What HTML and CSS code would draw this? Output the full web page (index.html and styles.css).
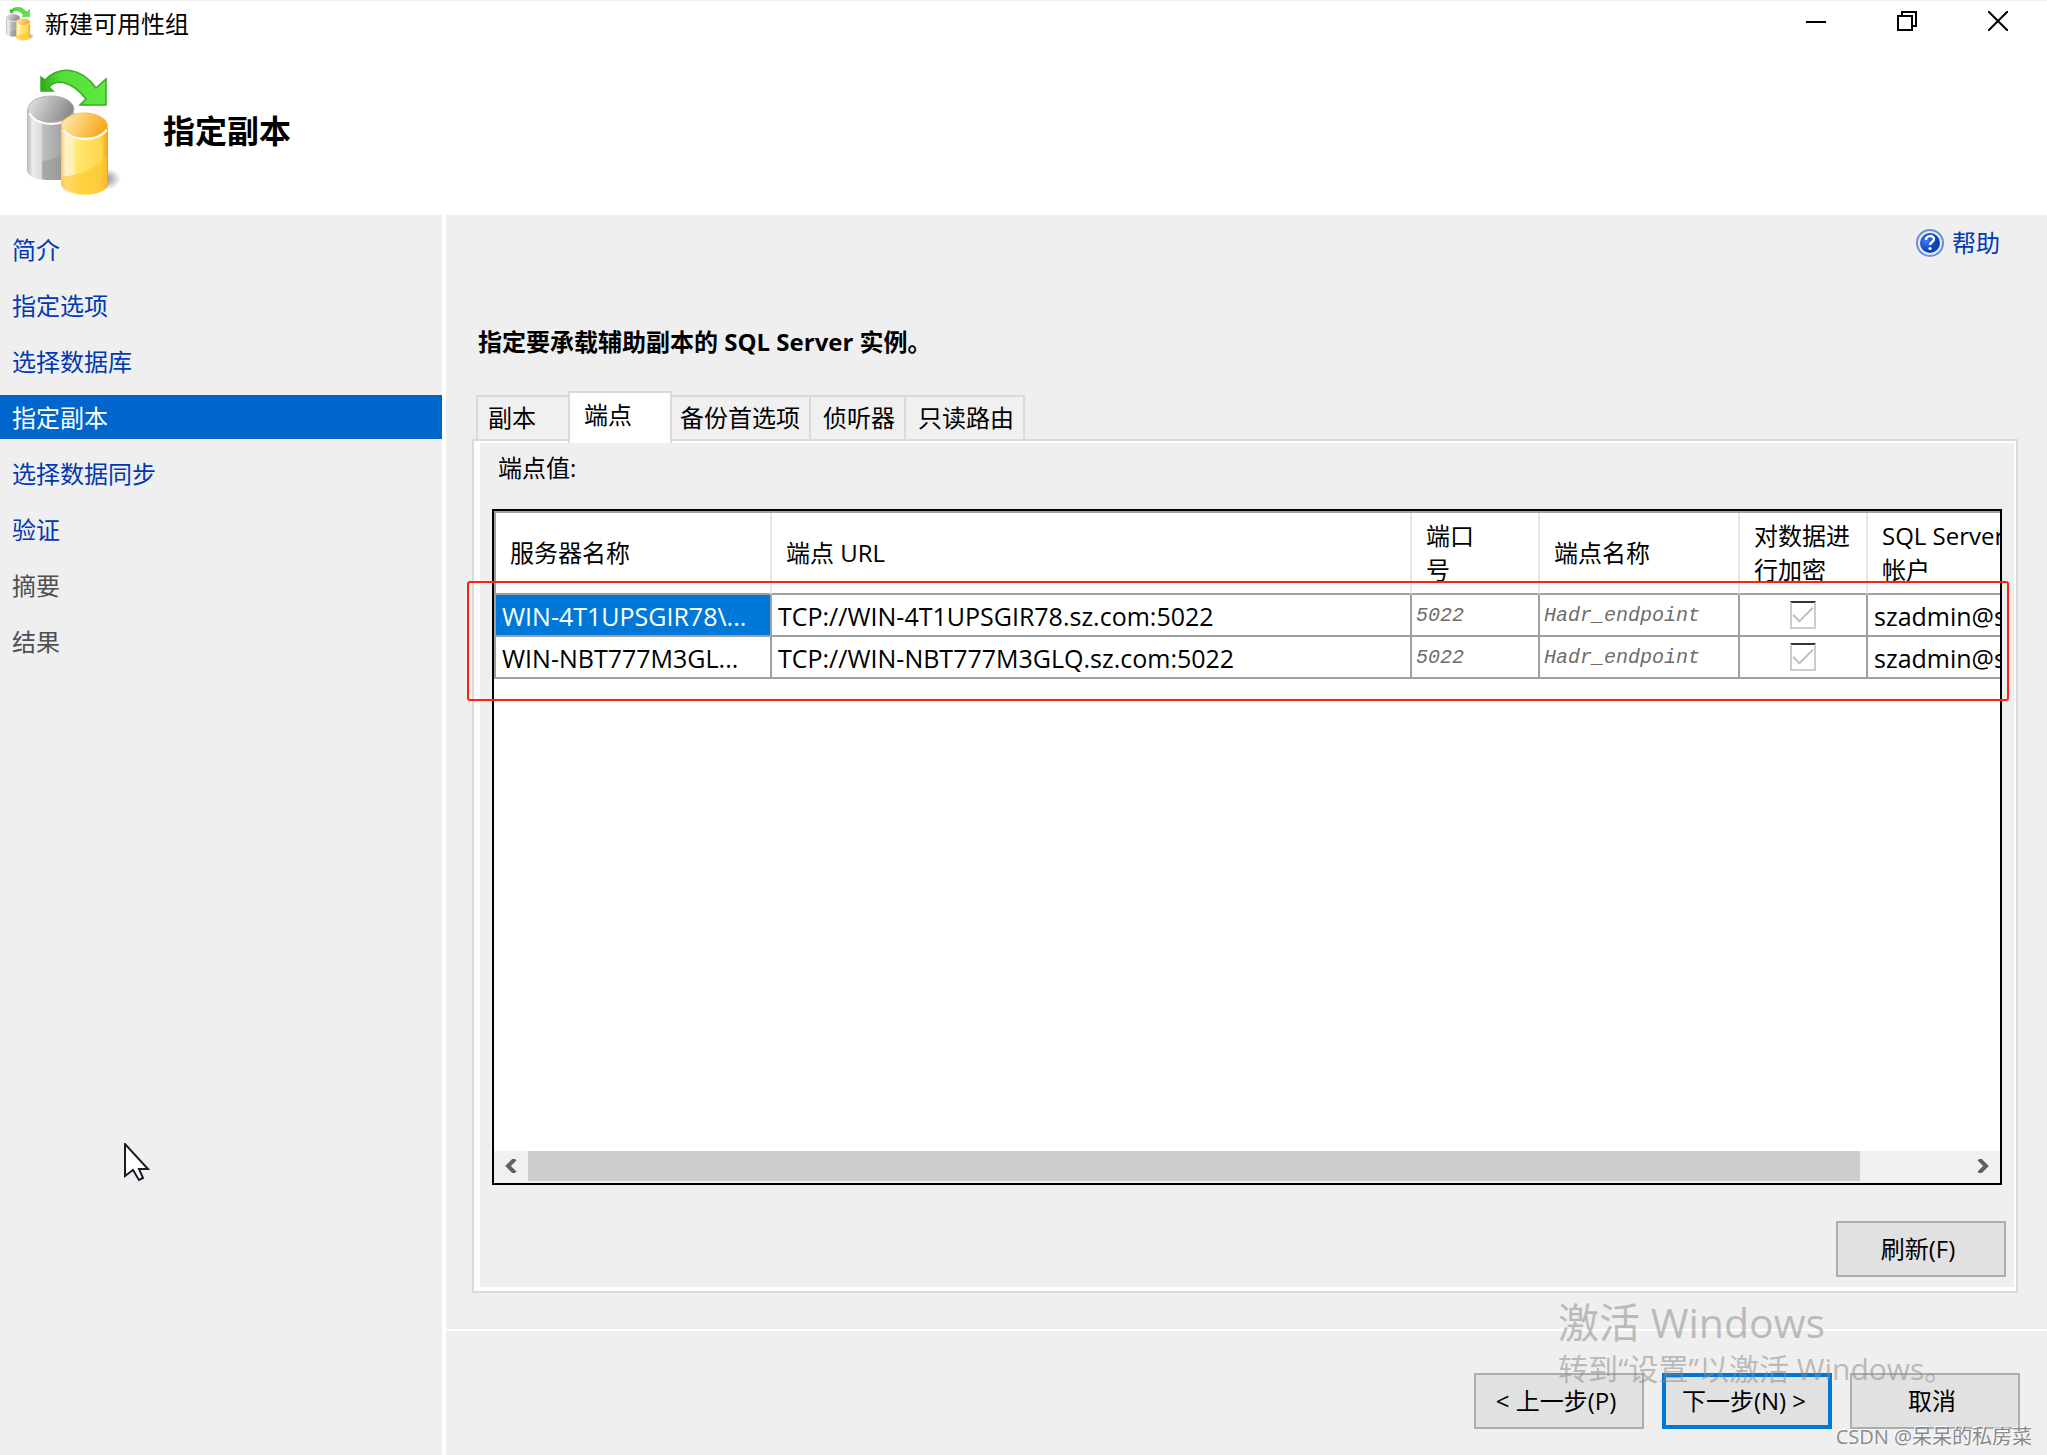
FILE: index.html
```html
<!DOCTYPE html>
<html lang="zh-CN">
<head>
<meta charset="utf-8">
<title>新建可用性组</title>
<link rel="stylesheet" href="styles.css">
</head>
<body>
<svg class="defs" width="0" height="0" aria-hidden="true">
  <defs>
    <linearGradient id="gray-side" x1="0" x2="1"><stop offset="0" stop-color="#b8b8b8"/><stop offset=".12" stop-color="#ececec"/><stop offset=".3" stop-color="#dcdcdc"/><stop offset=".34" stop-color="#bdbdbd"/><stop offset="1" stop-color="#959595"/></linearGradient>
    <linearGradient id="gray-top" x1="0" x2="1" y2=".3"><stop offset="0" stop-color="#e6e6e6"/><stop offset="1" stop-color="#8c8c8c"/></linearGradient>
    <linearGradient id="gold-side" x1="0" x2="1"><stop offset="0" stop-color="#fbc75c"/><stop offset=".1" stop-color="#fff3cc"/><stop offset=".27" stop-color="#fff0a8"/><stop offset=".32" stop-color="#ffe873"/><stop offset=".85" stop-color="#ffd64a"/><stop offset="1" stop-color="#f0a020"/></linearGradient>
    <linearGradient id="gold-top" x1="0" x2="1" y2=".3"><stop offset="0" stop-color="#fff0b8"/><stop offset="1" stop-color="#f9a91e"/></linearGradient>
    <linearGradient id="arrow" x1="0" x2="1"><stop offset="0" stop-color="#2fa81a"/><stop offset=".3" stop-color="#55dc38"/><stop offset="1" stop-color="#5fe842"/></linearGradient>
    <radialGradient id="shade"><stop offset="0" stop-color="#888"/><stop offset="1" stop-color="#888" stop-opacity="0"/></radialGradient>
    <radialGradient id="help-fill" cx=".3" cy=".4"><stop offset="0" stop-color="#3c7cff"/><stop offset="1" stop-color="#0c44b8"/></radialGradient>
    <symbol id="databases" viewBox="0 0 94 128" preserveAspectRatio="none">
      <ellipse cx="78" cy="110" rx="16" ry="11" fill="url(#shade)"/>
      <path d="M0 41v61c2 6 10 9 18 9h29V41z" fill="url(#gray-side)"/>
      <path d="M15 92q20-2 32-18v37H19l-4-2z" fill="#8a8a8a" opacity=".4"/>
      <ellipse cx="24" cy="40" rx="23" ry="13" fill="url(#gray-top)" stroke="#b5b5b5" stroke-width="1"/>
      <path d="M2 44q7 11 22 11t22-9" fill="none" stroke="#fff" stroke-width="2"/>
      <path d="M34 59v57c2 7 12 10 24 10s21-4 23-10V59z" fill="url(#gold-side)"/>
      <path d="M35 108q30-4 45-21v29c-2 6-11 9-22 9s-21-3-23-9z" fill="#ffc42c" opacity=".6"/>
      <ellipse cx="57.500" cy="57" rx="23" ry="13" fill="url(#gold-top)" stroke="#f9c052" stroke-width="1"/>
      <path d="M36 61q8 9 22 9t22-9" fill="none" stroke="#fff" stroke-width="2.500" opacity=".9"/>
      <path d="M14 8v14h12l-4-4c8-9 24-5 37 12l-6 6h26V10l-10 9C54-2 32-4 18 11z" fill="url(#arrow)" stroke="#35ad20" stroke-width="1.500"/>
    </symbol>
  </defs>
</svg>

<header class="top">
  <div class="titlebar">
    <svg class="app-icon" aria-hidden="true"><use href="#databases"/></svg>
    <span class="window-title">新建可用性组</span>
    <div class="window-controls">
      <button type="button" aria-label="最小化"><svg width="20" height="20"><path d="M0 11h20" stroke="#000" stroke-width="2"/></svg></button>
      <button type="button" aria-label="还原"><svg width="20" height="20"><path d="M1 5h14v14H1zM5 5V1h14v14h-4" fill="none" stroke="#000" stroke-width="2"/></svg></button>
      <button type="button" aria-label="关闭"><svg width="20" height="20"><path d="M0 0l20 20M20 0L0 20" stroke="#000" stroke-width="2"/></svg></button>
    </div>
  </div>
  <div class="banner">
    <svg class="banner-icon" aria-hidden="true"><use href="#databases"/></svg>
    <h1>指定副本</h1>
  </div>
</header>

<div class="body">
  <nav class="steps">
    <a href="#intro">简介</a>
    <a href="#options">指定选项</a>
    <a href="#databases-step">选择数据库</a>
    <a href="#replicas" class="current" aria-current="step">指定副本</a>
    <a href="#sync">选择数据同步</a>
    <a href="#validate">验证</a>
    <span>摘要</span>
    <span>结果</span>
  </nav>

  <div class="content">
    <main class="page">
      <div class="help">
        <a href="#help">
          <svg width="28" height="28" viewBox="0 0 28 28" aria-hidden="true">
            <circle cx="14" cy="14" r="13" fill="#e6edfa" stroke="#6f8fce" stroke-width="2"/>
            <circle cx="14" cy="14" r="10" fill="url(#help-fill)"/>
            <path d="M10 11c0-5 8-5 8-1 0 3-4 3-4 6" fill="none" stroke="#fff" stroke-width="2.500"/>
            <circle cx="14" cy="19.500" r="1.600" fill="#fff"/>
          </svg>
          帮助
        </a>
      </div>
      <h2>指定要承载辅助副本的 SQL Server 实例。</h2>

      <div class="tabs" role="tablist">
        <button type="button" role="tab" class="tab first">副本</button>
        <button type="button" role="tab" class="tab active" aria-selected="true">端点</button>
        <button type="button" role="tab" class="tab">备份首选项</button>
        <button type="button" role="tab" class="tab">侦听器</button>
        <button type="button" role="tab" class="tab">只读路由</button>
      </div>

      <section class="panel">
        <p class="caption" id="grid-caption">端点值:</p>
        <div class="grid-wrap">
          <div class="grid">
            <div class="grid-view">
              <table aria-labelledby="grid-caption">
                <colgroup><col class="c-server"><col class="c-url"><col class="c-port"><col class="c-name"><col class="c-enc"><col class="c-account"></colgroup>
                <thead>
                  <tr><th>服务器名称</th><th>端点 URL</th><th>端口<br>号</th><th>端点名称</th><th>对数据进<br>行加密</th><th>SQL Server<br>帐户</th></tr>
                </thead>
                <tbody>
                  <tr><td class="selected">WIN-4T1UPSGIR78\...</td><td>TCP://WIN-4T1UPSGIR78.sz.com:5022</td><td class="fixed">5022</td><td class="fixed">Hadr_endpoint</td><td class="check"><input type="checkbox" aria-label="对数据进行加密" checked disabled></td><td>szadmin@sz</td></tr>
                  <tr><td>WIN-NBT777M3GL...</td><td>TCP://WIN-NBT777M3GLQ.sz.com:5022</td><td class="fixed">5022</td><td class="fixed">Hadr_endpoint</td><td class="check"><input type="checkbox" aria-label="对数据进行加密" checked disabled></td><td>szadmin@sz</td></tr>
                </tbody>
              </table>
            </div>
            <div class="scrollbar">
              <button type="button" aria-label="向左滚动"><svg width="12" height="14"><path d="M10 0L3 7l7 7" fill="none" stroke="#606060" stroke-width="4"/></svg></button>
              <div class="track"><div class="thumb"></div></div>
              <button type="button" aria-label="向右滚动"><svg width="12" height="14"><path d="M2 0l7 7-7 7" fill="none" stroke="#606060" stroke-width="4"/></svg></button>
            </div>
          </div>
          <div class="highlight"></div>
        </div>
        <div class="panel-actions"><button type="button" class="btn">刷新(F)</button></div>
      </section>
    </main>

    <footer class="actions">
      <button type="button" class="btn">&lt; 上一步(P)</button>
      <button type="button" class="btn primary">下一步(N) &gt;</button>
      <button type="button" class="btn">取消</button>
    </footer>
  </div>
</div>

<div class="activation">
  <p class="activation-title">激活 Windows</p>
  <p class="activation-text">转到“设置”以激活 Windows。</p>
</div>
<div class="credit">CSDN @呆呆的私房菜</div>
<svg class="pointer" width="26" height="40" viewBox="0 0 26 40" aria-hidden="true"><path d="M1 1v32l8-6 6 10 4-2-4-9h9z" fill="#fff" stroke="#1c1c28" stroke-width="2"/></svg>
</body>
</html>
```
FILE: styles.css
```css
* { box-sizing: border-box; }

body {
  margin: 0;
  min-height: 100vh;
  display: flex;
  flex-direction: column;
  position: relative;
  overflow: hidden;
  background: #fff;
  color: #000;
  font: 24px/34px "Open Sans", "Noto Sans CJK SC", sans-serif;
}

button { font: inherit; color: inherit; }
h1, h2, p { margin: 0; }
.defs { position: absolute; }

.top {
  height: 215px;
  border-top: 1px solid #eee;
}

.titlebar {
  display: flex;
  align-items: flex-end;
  height: 42px;
  padding: 0 4px 2px 6px;
}
.app-icon { width: 28px; height: 34px; }
.window-title { margin-left: 11px; }
.window-controls { display: flex; margin-left: auto; }
.window-controls button {
  display: flex;
  align-items: center;
  justify-content: center;
  width: 91px;
  height: 40px;
  padding: 0;
  border: 0;
  background: none;
}

.banner {
  display: flex;
  align-items: center;
  gap: 42px;
  padding: 26px 27px 0;
}
.banner-icon { width: 94px; height: 128px; }
h1 { padding-bottom: 4px; font-size: 32px; line-height: 44px; }

.body {
  flex: 1;
  display: flex;
  gap: 4px;
}

.steps {
  display: flex;
  flex-direction: column;
  gap: 12px;
  width: 442px;
  padding-top: 12px;
  background: #efefef;
}
.steps > * {
  height: 44px;
  padding-left: 12px;
  line-height: 46px;
  color: #505050;
}
.steps a { color: #0039b3; text-decoration: none; }
.steps .current { background: #0066cc; color: #fff; }

.content {
  flex: 1;
  min-width: 0;
  display: flex;
  flex-direction: column;
  background: #efefef;
}

.page {
  flex: 1;
  display: flex;
  flex-direction: column;
  padding: 10px 29px 36px 26px;
}

.help { display: flex; justify-content: flex-end; padding-right: 18px; }
.help a {
  display: flex;
  align-items: center;
  gap: 8px;
  height: 36px;
  color: #0039b3;
  text-decoration: none;
}

h2 {
  margin: 64px 0 32px 6px;
  font-size: 24px;
  line-height: 34px;
}

.tabs {
  display: flex;
  align-items: flex-end;
  height: 48px;
  padding-left: 4px;
}
.tab {
  height: 44px;
  padding: 0 9px 0 12px;
  border: 2px solid #dadada;
  border-width: 2px 2px 0 0;
  background: #f0f0f0;
  text-align: left;
}
.tab.first { width: 92px; padding-left: 10px; border-width: 2px 0 0 2px; }
.tab.active {
  position: relative;
  align-self: flex-start;
  width: 104px;
  height: 52px;
  padding: 0 14px 6px;
  border-width: 2px 2px 0;
  background: #fff;
}
.tab.active + .tab { padding-left: 8px; }

.panel {
  flex: 1;
  display: flex;
  flex-direction: column;
  border: 2px solid #dadada;
  background: #efefef;
  box-shadow: inset 6px 0 #fff, inset -2px 0 #fff, inset 0 2px #fff, inset 0 -4px #fff;
  padding: 10px 14px 14px 18px;
}
.caption { padding: 0 0 24px 6px; }

.grid-wrap {
  position: relative;
  flex: 1;
  display: flex;
}
.grid {
  flex: 1;
  min-width: 0;
  display: flex;
  flex-direction: column;
  border: 2px solid #000;
  background: #fff;
}
.grid-view { flex: 1; overflow: hidden; border-top: 2px solid #a0a0a0; }

table {
  width: 1622px;
  table-layout: fixed;
  border-collapse: separate;
  border-spacing: 0;
  border-left: 2px solid #a0a0a0;
}
.c-server { width: 276px; }
.c-url { width: 640px; }
.c-port, .c-enc { width: 128px; }
.c-name { width: 200px; }
.c-account { width: 248px; }
th {
  height: 82px;
  padding: 0 14px;
  border-right: 2px solid #e5e5e5;
  border-bottom: 2px solid #a0a0a0;
  font-weight: 400;
  text-align: left;
  white-space: nowrap;
}
td {
  height: 42px;
  padding: 2px 6px 0;
  border-right: 2px solid #a0a0a0;
  border-bottom: 2px solid #a0a0a0;
  font-size: 25px;
  white-space: nowrap;
}
.selected { background: #0078d7; color: #fff; }
.fixed {
  padding: 2px 4px 0;
  color: #6d6d6d;
  font: italic 20px/34px "Liberation Mono", monospace;
}
.check { padding: 0; line-height: 0; text-align: center; }
.check input {
  appearance: none;
  width: 26px;
  height: 28px;
  margin: 0;
  border: 2px solid #ccc;
  border-top-color: #333;
  display: inline-grid;
  place-items: center;
}
.check input:checked::before {
  content: "";
  width: 18px;
  height: 8px;
  margin-bottom: 6px;
  border: solid #bfbfbf;
  border-width: 0 0 2px 2px;
  transform: rotate(-45deg);
}

.scrollbar {
  display: flex;
  height: 32px;
  padding-bottom: 2px;
  background: #f0f0f0;
}
.scrollbar button {
  display: flex;
  align-items: center;
  justify-content: center;
  width: 34px;
  padding: 0;
  border: 0;
  background: none;
}
.track { flex: 1; }
.thumb { width: calc(100% - 106px); height: 100%; background: #cdcdcd; }

/* Red frame drawn over the data rows */
.highlight {
  position: absolute;
  top: 72px;
  left: -25px;
  right: -7px;
  height: 120px;
  border: 2px solid #ff2010;
  border-radius: 3px;
  pointer-events: none;
}

.panel-actions {
  display: flex;
  justify-content: flex-end;
  margin: 36px -4px 0 0;
}

.btn {
  width: 170px;
  height: 56px;
  padding: 0 6px 0 0;
  border: 2px solid #adadad;
  background: #e1e1e1;
  text-align: center;
}
.btn.primary { border: 4px solid #0078d7; }

.actions {
  display: flex;
  justify-content: flex-end;
  gap: 18px;
  padding: 42px 27px 26px;
  border-top: 2px solid #fff;
}

/* Overlays that float above the window */
.activation {
  position: absolute;
  right: 29px;
  bottom: 64px;
  width: 460px;
  color: rgba(140, 140, 140, .55);
  white-space: nowrap;
  pointer-events: none;
}
.activation-title { font-size: 41px; line-height: 50px; }
.activation-text { font-size: 30px; line-height: 44px; }
.credit {
  position: absolute;
  right: 15px;
  bottom: 4px;
  color: #8a8a8a;
  font-size: 20px;
  line-height: 28px;
  text-shadow: -1px -1px #fff;
  pointer-events: none;
}
.pointer { position: absolute; left: 124px; top: 1143px; pointer-events: none; }
```
